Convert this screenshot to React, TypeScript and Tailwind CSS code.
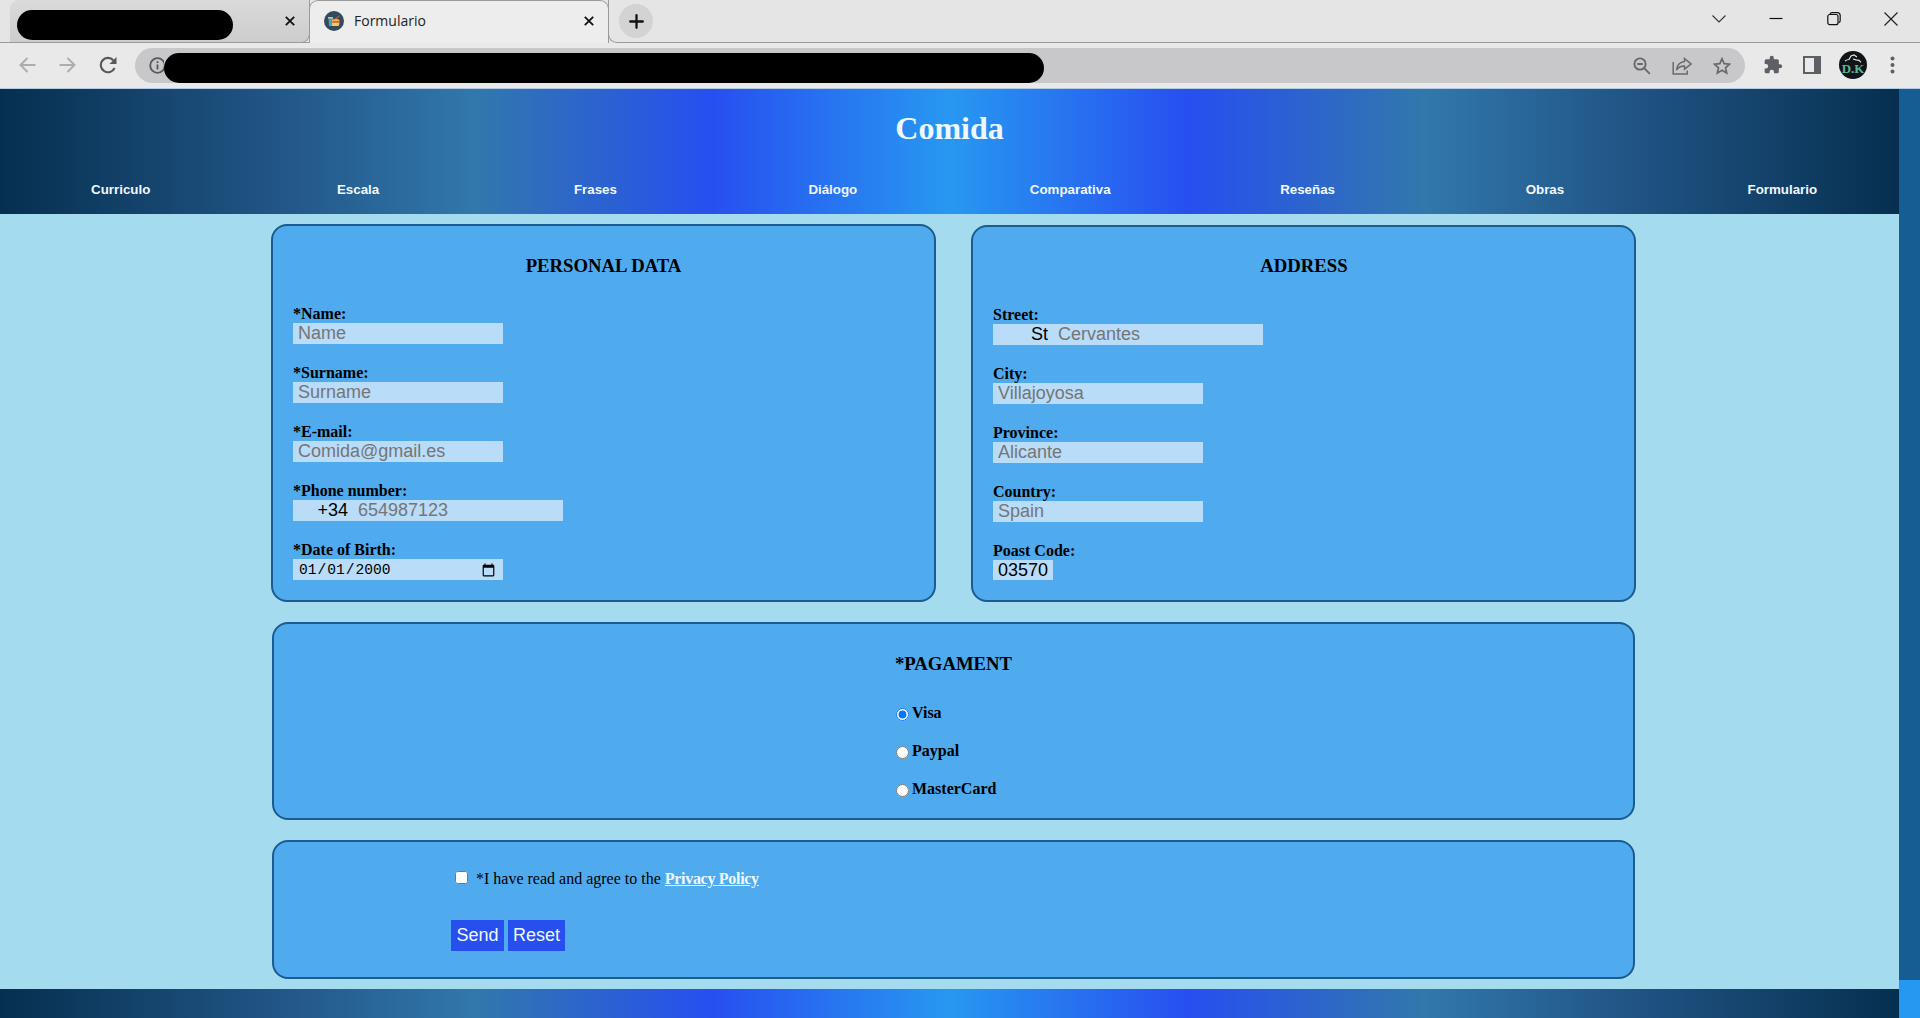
import React from "react";

const serif = "font-['Liberation_Serif',serif]";
const HEAD =
  "bg-[linear-gradient(90deg,#062f4f_0%,#23588a_15.5%,#3178ac_25%,#274ff0_37.5%,#2798f1_50%,#274ff0_62.5%,#3178ac_75%,#23588a_84.5%,#062f4f_100%)]";
const field =
  "block rounded-none border-0 bg-[#b9dcf8] px-[5px] py-0 font-['Liberation_Sans',sans-serif] text-[18px] leading-[21px] text-black outline-none placeholder:text-[#757575]";

function Close() {
  return (
    <svg width="10" height="10" viewBox="0 0 10 10" stroke="#111" strokeWidth="1.8" className="block">
      <path d="M.8.8 9.2 9.2M9.2.8.8 9.2" />
    </svg>
  );
}

function Favicon() {
  return (
    <svg width="20" height="20" viewBox="0 0 20 20" className="block">
      <circle cx="10" cy="10" r="10" fill="#33495d" />
      <path d="M4.500 7H9v8H5z" fill="#37a7c9" />
      <path d="M4 6h5v1.500H4z" fill="#e9c25a" />
      <path d="M8 9q3.500-2.500 7.500 0v1.500H8z" fill="#f2b24c" />
      <path d="M8 10.500h7.500V12H8z" fill="#e0733d" />
      <path d="M8 12h7.500l-.8 3H8z" fill="#f5c66b" />
      <path d="m10.500 8.500 5-3.500" stroke="#d8673c" strokeWidth="1" />
    </svg>
  );
}

function TabStrip() {
  return (
    <div className="flex h-[43px] w-full bg-[#e5e5e5]">
      <div className="flex h-[43px] w-[310px] shrink-0 items-start border-b border-[#9a9a9a] pl-[10px]">
        <div className="flex h-[43px] w-[300px] items-start rounded-tl-[9px] rounded-br-[9px] border-r border-b border-[#9a9a9a] bg-[linear-gradient(180deg,#dadada,#cdcdcd)] pl-[7px]">
          <div className="mt-[10px] h-[30px] w-[216px] shrink-0 rounded-full bg-black" />
          <div className="mt-4 ml-[52px]">
            <Close />
          </div>
        </div>
      </div>
      <div className="-ml-px flex h-[43px] w-[300px] shrink-0 rounded-t-[9px] border border-b-0 border-[#9a9a9a] bg-[#ededed] pl-[14px]">
        <div className="mt-[10px]">
          <Favicon />
        </div>
        <span className="mt-[10px] ml-[10px] w-[219px] font-['Open_Sans',sans-serif] text-[14px] leading-5 text-[#222]">Formulario</span>
        <div className="mt-[15px] ml-[11px]">
          <Close />
        </div>
      </div>
      <div className="-ml-px flex grow items-start justify-between rounded-bl-[9px] border-b border-l border-[#9a9a9a]">
        <div className="mt-1 ml-[10px] flex h-[34px] w-[34px] items-center justify-center rounded-full bg-[#d3d3d3]">
          <svg width="15" height="15" viewBox="0 0 15 15" stroke="#111" strokeWidth="2.300" strokeLinecap="round">
            <path d="M7.500 1.200v12.600M1.200 7.500h12.600" />
          </svg>
        </div>
        <div className="mt-[12px] mr-[22px] flex items-center gap-[43.500px]">
          <svg width="14" height="14" viewBox="0 0 14 14" fill="none" stroke="#333" strokeWidth="1.100">
            <path d="m.5 3.500 6.500 6.500 6.500-6.500" />
          </svg>
          <svg width="14" height="14" viewBox="0 0 14 14" stroke="#111" strokeWidth="1.200">
            <path d="M.5 6.500h13" />
          </svg>
          <svg width="14" height="14" viewBox="0 0 14 14" fill="none" stroke="#111" strokeWidth="1.200">
            <rect x=".8" y="2.500" width="10.200" height="10.200" rx="2" />
            <path d="M3 2Q3.400.6 5.200.6h5q3 0 3 3v5q0 1.600-1.400 2.200" />
          </svg>
          <svg width="14" height="14" viewBox="0 0 14 14" stroke="#222" strokeWidth="1.200">
            <path d="M.5.5l13 13M13.500.5.5 13.500" />
          </svg>
        </div>
      </div>
    </div>
  );
}

function Toolbar() {
  return (
    <div className="flex h-[46px] w-full items-start border-b border-[#b3cbe4] bg-[#e9e9e9] pt-[5px]">
      <div className="flex h-[34px] w-[135px] shrink-0 items-center gap-[23px] pl-[19px]">
        <svg width="17" height="16" viewBox="0 0 17 16" fill="none" stroke="#adadad" strokeWidth="2">
          <path d="M16.500 8H2M8.500 1 1.500 8l7 7" />
        </svg>
        <svg width="17" height="16" viewBox="0 0 17 16" fill="none" stroke="#adadad" strokeWidth="2">
          <path d="M.5 8H15M8.500 1l7 7-7 7" />
        </svg>
        <svg width="18" height="18" viewBox="0 0 18 18">
          <path d="M15.600 12A7.200 7.200 0 1 1 14.300 4.200" fill="none" stroke="#55585c" strokeWidth="2.100" />
          <path d="M17.500 1v7h-7z" fill="#55585c" />
        </svg>
      </div>
      <div className="flex h-[35px] w-[1610px] shrink-0 items-start rounded-full bg-[#c8c8ca]">
        <div className="mt-[9px] ml-[14px] w-[15px] overflow-hidden">
          <svg width="17" height="17" viewBox="0 0 17 17" fill="none" stroke="#55585c" strokeWidth="1.800">
            <circle cx="8.500" cy="8.500" r="7.300" />
            <path d="M8.500 7.500v5M8.500 4.200V6" />
          </svg>
        </div>
        <div className="mt-[5px] h-[30px] w-[880px] rounded-[15px] bg-black" />
        <div className="mt-[8px] ml-[589px] flex h-[19px] items-center gap-[21px]">
          <svg width="18" height="18" viewBox="0 0 18 18" fill="none" stroke="#66696e" strokeWidth="1.900">
            <circle cx="7" cy="7" r="5.600" />
            <path d="m11.200 11.200 5.600 5.600M4.200 7h5.600" />
          </svg>
          <svg width="20" height="18" viewBox="0 0 20 18" fill="none" stroke="#66696e" strokeWidth="1.500">
            <path d="M1.200 5v12h14v-3.500" />
            <path d="M12.500 1.500 19 7l-6.500 5.200V9Q7 9 4.500 13 5.500 5.500 12.500 4.600z" />
          </svg>
          <svg width="18" height="18" viewBox="0 0 18 18" fill="none" stroke="#66696e" strokeWidth="1.700">
            <path d="m9 1.800 2.200 4.900 5.300.5-4 3.600 1.200 5.300L9 13.300l-4.700 2.800 1.200-5.300-4-3.600 5.300-.5z" />
          </svg>
        </div>
      </div>
      <div className="ml-[18px] flex h-[34px] items-center">
        <svg width="20" height="20" viewBox="0 0 24 24" fill="#5c5f64">
          <path d="M20.500 11H19V7a2 2 0 0 0-2-2h-4V3.500a2.500 2.500 0 0 0-5 0V5H4a2 2 0 0 0-2 2v3.800h1.500a2.700 2.700 0 0 1 0 5.400H2V20a2 2 0 0 0 2 2h3.800v-1.500a2.700 2.700 0 0 1 5.400 0V22H17a2 2 0 0 0 2-2v-4h1.500a2.500 2.500 0 0 0 0-5z" />
        </svg>
        <svg width="18" height="18" viewBox="0 0 18 18" className="ml-[20px]">
          <path d="M0 0h18v18H0zM2 2v14h9V2z" fill="#5c5f64" fillRule="evenodd" />
        </svg>
        <div className="ml-[18px] flex h-7 w-7 flex-col items-center overflow-hidden rounded-full bg-[#111416]">
          <svg width="18" height="9" viewBox="0 0 18 9" fill="none" stroke="#e4e4e4" strokeWidth="1.200" className="mt-[3px] shrink-0">
            <path d="M1 7q2-1.500 4-1.500L7 2l3-1 3 2M9 5l3 .8 3 .5 2 2" />
          </svg>
          <span className="font-['Liberation_Serif',serif] text-[13px] leading-[11px] font-bold text-[#58b79a]">D.K</span>
        </div>
        <svg width="5" height="18" viewBox="0 0 5 18" fill="#5c5f64" className="ml-[23px]">
          <circle cx="2.500" cy="2.500" r="2" />
          <circle cx="2.500" cy="9" r="2" />
          <circle cx="2.500" cy="15.500" r="2" />
        </svg>
      </div>
    </div>
  );
}

const nav = ["Curriculo", "Escala", "Frases", "Diálogo", "Comparativa", "Reseñas", "Obras", "Formulario"];

function Field({ label, children }: { label: string; children: React.ReactNode }) {
  return (
    <div className="h-[59px]">
      <div className="h-[18px] text-[16px] leading-[18px] font-bold">{label}</div>
      {children}
    </div>
  );
}

const card = "rounded-2xl border-2 border-[#1b5c8e] bg-[#4faaee]";
const h3 = "text-[18.72px] leading-[22px] font-bold";

export default function App() {
  return (
    <div className="flex h-[1018px] w-[1920px] flex-col overflow-hidden">
      <TabStrip />
      <Toolbar />
      <div className="flex grow">
        <div className={`w-[1899px] bg-[#a4dbef] text-black ${serif}`}>
          <header className={`h-[125px] text-[#f0f8ff] ${HEAD}`}>
            <h1 className="pt-[21px] text-center text-[32px] leading-[37px] font-bold">Comida</h1>
            <nav className="mt-[35px] -mr-[2px] grid grid-cols-8 pl-[2px] text-center font-['Liberation_Sans',sans-serif] text-[13.33px] leading-4 font-bold">
              {nav.map((n) => (
                <a key={n}>{n}</a>
              ))}
            </nav>
          </header>
          <main className="h-[775px] pt-[10px] pl-[271px]">
            <div className="flex gap-[35px]">
              <section className={`h-[378px] w-[665px] px-5 ${card}`}>
                <h3 className={`mt-[29px] mb-[28px] text-center ${h3}`}>PERSONAL DATA</h3>
                <Field label="*Name:">
                  <input className={`h-[21px] w-[210px] ${field}`} placeholder="Name" />
                </Field>
                <Field label="*Surname:">
                  <input className={`h-[21px] w-[210px] ${field}`} placeholder="Surname" />
                </Field>
                <Field label="*E-mail:">
                  <input className={`h-[21px] w-[210px] ${field}`} placeholder="Comida@gmail.es" />
                </Field>
                <Field label="*Phone number:">
                  <div className="flex">
                    <input className={`h-[21px] w-[60px] text-right ${field}`} defaultValue="+34" />
                    <input className={`h-[21px] w-[210px] ${field}`} placeholder="654987123" />
                  </div>
                </Field>
                <Field label="*Date of Birth:">
                  <input
                    type="date"
                    defaultValue="2000-01-01"
                    className="block h-[21px] w-[210px] border-0 bg-[#b9dcf8] px-[5px] pt-[2px] pb-0 font-['Liberation_Mono',monospace] text-[14.600px] leading-[21px] outline-none"
                  />
                </Field>
              </section>
              <section className={`mt-px h-[377px] w-[665px] pr-[19px] pl-5 ${card}`}>
                <h3 className={`mt-[28px] mb-[29px] text-center ${h3}`}>ADDRESS</h3>
                <Field label="Street:">
                  <div className="flex">
                    <input className={`h-[21px] w-[60px] text-right ${field}`} defaultValue="St" />
                    <input className={`h-[21px] w-[210px] ${field}`} placeholder="Cervantes" />
                  </div>
                </Field>
                <Field label="City:">
                  <input className={`h-[21px] w-[210px] ${field}`} placeholder="Villajoyosa" />
                </Field>
                <Field label="Province:">
                  <input className={`h-[21px] w-[210px] ${field}`} placeholder="Alicante" />
                </Field>
                <Field label="Country:">
                  <input className={`h-[21px] w-[210px] ${field}`} placeholder="Spain" />
                </Field>
                <Field label="Poast Code:">
                  <input className={`h-[20px] w-[60px] ${field}`} defaultValue="03570" />
                </Field>
              </section>
            </div>
            <section className={`mt-5 ml-px flex h-[198px] w-[1363px] justify-center ${card}`}>
              <div>
                <h3 className={`mt-[29px] mb-[29px] ${h3}`}>*PAGAMENT</h3>
                {["Visa", "Paypal", "MasterCard"].map((p, i) => (
                  <label key={p} className="flex h-[38px] items-start pl-px text-[16px] leading-[18px] font-bold">
                    <input type="radio" name="pay" defaultChecked={i === 0} className="mt-1 mr-[3px] h-[13px] w-[13px]" />
                    {p}
                  </label>
                ))}
              </div>
            </section>
            <section className={`mt-5 ml-px h-[139px] w-[1363px] pt-7 pl-[177px] ${card}`}>
              <label className="flex items-start pl-1 text-[16px] leading-[18px]">
                <input type="checkbox" className="mt-[1px] mr-2 h-[13px] w-[13px]" />
                <span>
                  *I have read and agree to the{" "}
                  <a className="font-bold tracking-[-0.3px] text-[#f0f8ff] underline">Privacy Policy</a>
                </span>
              </label>
              <div className="mt-[32px] flex gap-[4px] font-['Liberation_Sans',sans-serif] text-[18px] leading-[31px] text-[#f0f8ff]">
                <button className="h-[31px] w-[53px] bg-[#274ff0]">Send</button>
                <button className="h-[31px] w-[57px] bg-[#274ff0]">Reset</button>
              </div>
            </section>
          </main>
          <footer className={`h-[29px] ${HEAD}`} />
        </div>
        <div className="flex w-[21px] flex-col bg-[#165d93]">
          <div className="mt-[891px] h-[38px] bg-[#2798f1]" />
        </div>
      </div>
    </div>
  );
}
